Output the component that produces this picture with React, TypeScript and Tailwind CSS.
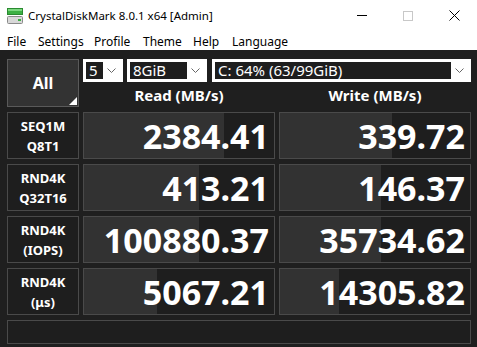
const rows = [
  { a: "SEQ1M", b: "Q8T1", read: "2384.41", write: "339.72", rp: 140, wp: 112 },
  { a: "RND4K", b: "Q32T16", read: "413.21", write: "146.37", rp: 115, wp: 101 },
  { a: "RND4K", b: "(IOPS)", read: "100880.37", write: "35734.62", rp: 115, wp: 101 },
  { a: "RND4K", b: "(\u03bcs)", read: "5067.21", write: "14305.82", rp: 73, wp: 59 },
];

const menu = [
  { label: "File", w: 31 },
  { label: "Settings", w: 56 },
  { label: "Profile", w: 49 },
  { label: "Theme", w: 50 },
  { label: "Help", w: 39 },
  { label: "Language", w: 70 },
];

const Chevron = () => (
  <svg width="9" height="6" viewBox="0 0 9 6" className="shrink-0">
    <polyline points="0.5,0.5 4.5,4.5 8.5,0.5" fill="none" stroke="#666" strokeWidth="1" />
  </svg>
);

const Combo = ({ text, w, inner }: { text: string; w: number; inner: number }) => (
  <div
    className="flex h-[23px] items-center bg-white p-[3px]"
    style={{ width: w }}
  >
    <div
      className="flex h-full items-center bg-[#1e1e1e] pl-[3px] text-[15px] leading-none text-white"
      style={{ width: inner }}
    >
      {text}
    </div>
    <div className="flex flex-1 items-center justify-center">
      <Chevron />
    </div>
  </div>
);

const Bar = ({ value, fill }: { value: string; fill: number }) => (
  <div className="relative flex h-[47px] items-center justify-end overflow-hidden border border-[#4a4a4a] bg-[#1e1e1e] pr-[5px]">
    <div className="absolute inset-y-0 left-0 bg-[#323232]" style={{ width: fill }} />
    <span className="relative text-[34px] font-bold leading-none text-white">{value}</span>
  </div>
);

const DiskIcon = () => (
  <svg width="16" height="16" viewBox="0 0 16 16">
    <rect x="0.5" y="0.5" width="15" height="6" fill="#3cb043" stroke="#2a8a30" />
    <rect x="1" y="1" width="14" height="2" fill="#7bd77f" />
    <rect x="0.5" y="8.5" width="15" height="7" rx="1" fill="#d8d8d8" stroke="#8a8a8a" />
    <rect x="11" y="11" width="3" height="2" fill="#3cb043" />
  </svg>
);

export default function App() {
  return (
    <div
      className="flex h-[347px] w-[477px] flex-col overflow-hidden bg-[#1f1f1f]"
      style={{ fontFamily: '"Noto Sans", "Open Sans", sans-serif' }}
    >
      <div className="flex h-[30px] items-center bg-white pt-[1px]">
        <div className="ml-[7px] mr-[5px] flex items-center">
          <DiskIcon />
        </div>
        <span className="text-[11.5px] text-black">CrystalDiskMark 8.0.1 x64 [Admin]</span>
        <div className="ml-auto flex h-full items-center">
          <div className="flex h-full w-[46px] items-center justify-center">
            <div className="h-px w-[10px] bg-black" />
          </div>
          <div className="flex h-full w-[46px] items-center justify-center">
            <div className="h-[10px] w-[10px] border border-[#c8c8c8]" />
          </div>
          <div className="flex h-full w-[46px] items-center justify-center">
            <svg width="11" height="11" viewBox="0 0 11 11">
              <path d="M0.5 0.5 L10.5 10.5 M10.5 0.5 L0.5 10.5" stroke="#000" strokeWidth="1" />
            </svg>
          </div>
        </div>
      </div>
      <div className="flex h-[20px] items-center bg-white pl-[7px] pt-[3px] text-[12px] text-black">
        {menu.map((m) => (
          <span key={m.label} className="shrink-0" style={{ width: m.w }}>
            {m.label}
          </span>
        ))}
      </div>
      <div className="flex flex-1 flex-col gap-[5px] pl-[7px] pr-[6px] pt-[9px]">
        <div className="grid h-[48px] grid-cols-[72px_192px_192px] gap-x-[4px]">
          <div className="relative flex items-center justify-center border border-[#5a5a5a] bg-[#333333]">
            <span className="text-[16px] font-bold text-white">All</span>
            <div className="absolute bottom-[1px] right-[1px] h-0 w-0 border-b-[8px] border-l-[8px] border-b-white border-l-transparent" />
          </div>
          <div className="col-span-2 flex flex-col">
            <div className="flex gap-[4px]">
              <Combo text="5" w={40} inner={17} />
              <Combo text="8GiB" w={80} inner={57} />
              <div className="ml-[1px]">
                <Combo text="C: 64% (63/99GiB)" w={259} inner={236} />
              </div>
            </div>
            <div className="grid flex-1 grid-cols-2 gap-x-[4px]">
              <div className="flex items-center justify-center pt-[2px] text-[15px] font-bold text-white">Read (MB/s)</div>
              <div className="flex items-center justify-center pt-[2px] text-[15px] font-bold text-white">Write (MB/s)</div>
            </div>
          </div>
        </div>
        {rows.map((r, i) => (
          <div key={i} className="grid grid-cols-[72px_192px_192px] gap-x-[4px]">
            <div className="flex h-[47px] flex-col items-center justify-center border border-[#4a4a4a] bg-[#1e1e1e] text-[13px] font-bold leading-[20px] text-white">
              <span>{r.a}</span>
              <span>{r.b}</span>
            </div>
            <Bar value={r.read} fill={r.rp} />
            <Bar value={r.write} fill={r.wp} />
          </div>
        ))}
        <div className="h-[24px] w-[464px] border border-[#4a4a4a] bg-[#1e1e1e]" />
      </div>
    </div>
  );
}
